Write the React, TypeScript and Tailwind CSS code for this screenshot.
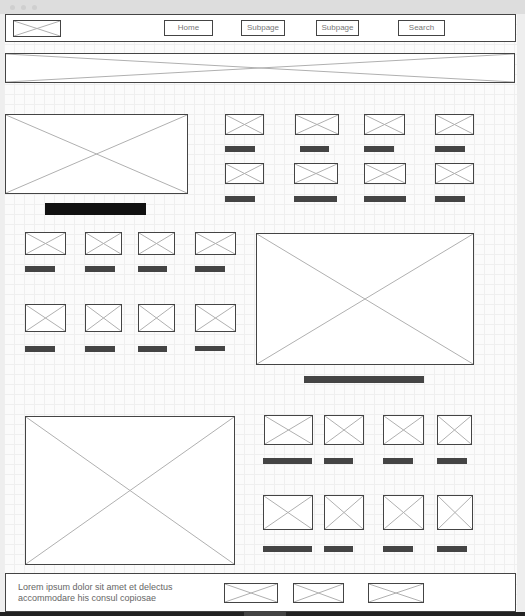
import React from 'react';

// wireframe placeholder: bordered box with a cross
function Ph({ className = '' }: { className?: string }) {
  return (
    <div className={`relative shrink-0 border border-[#444] bg-white ${className}`}>
      <svg className="absolute inset-0 h-full w-full" preserveAspectRatio="none" viewBox="0 0 100 100">
        <line x1="0" y1="0" x2="100" y2="100" stroke="#b0b0b0" strokeWidth="1" vectorEffect="non-scaling-stroke" />
        <line x1="100" y1="0" x2="0" y2="100" stroke="#b0b0b0" strokeWidth="1" vectorEffect="non-scaling-stroke" />
      </svg>
    </div>
  );
}

function Bar({ className = '' }: { className?: string }) {
  return <div className={`shrink-0 bg-[#444] ${className}`} />;
}

function NavButton({ label, className = '' }: { label: string; className?: string }) {
  return (
    <div className={`flex h-[16px] items-center justify-center border border-[#444] bg-white text-[8px] text-[#777] ${className}`}>
      {label}
    </div>
  );
}

export default function App() {
  return (
    <div className="flex h-[616px] w-[525px] flex-col overflow-hidden bg-[#eeeeee] font-['Liberation_Sans',sans-serif]">
      {/* window chrome */}
      <div className="flex h-[14px] shrink-0 items-center gap-[6px] bg-[#dddddd] pl-[10px]">
        <span className="h-[5px] w-[5px] rounded-full bg-[#cfcfcf]" />
        <span className="h-[5px] w-[5px] rounded-full bg-[#cfcfcf]" />
        <span className="h-[5px] w-[5px] rounded-full bg-[#cfcfcf]" />
      </div>

      <div className="flex h-[598px] shrink-0">
        <div className="w-[4px] shrink-0 bg-[#eeeeee]" />
        <main className="flex w-[513px] shrink-0 flex-col bg-[#fbfbfb] bg-[linear-gradient(to_right,#efefef_1px,transparent_1px),linear-gradient(to_bottom,#efefef_1px,transparent_1px)] bg-[size:10px_10px] px-[1px]">
          {/* Nav */}
          <nav className="flex h-[28px] w-[511px] shrink-0 items-center border border-[#444] bg-white">
            <Ph className="ml-[7px] h-[17px] w-[48px]" />
            <NavButton label="Home" className="ml-[103px] w-[49px]" />
            <NavButton label="Subpage" className="ml-[28px] w-[44px]" />
            <NavButton label="Subpage" className="ml-[31px] w-[43px]" />
            <NavButton label="Search" className="ml-[39px] w-[47px]" />
          </nav>

          {/* Banner */}
          <Ph className="mt-[11px] h-[30px] w-[510px]" />

          {/* Section 1 */}
          <section className="mt-[31px] flex items-start">
            <div className="flex w-[183px] flex-col">
              <Ph className="h-[80px] w-[183px]" />
              <div className="ml-[40px] mt-[9px] h-[12px] w-[101px] bg-[#111]" />
            </div>
            <div className="ml-[37px] grid grid-cols-[70px_70px_71px_39px] gap-y-[11px]">
              <div className="flex flex-col"><Ph className="h-[21px] w-[39px]" /><Bar className="mt-[11px] h-[6px] w-[30px]" /></div>
              <div className="flex flex-col"><Ph className="h-[21px] w-[44px]" /><Bar className="ml-[5px] mt-[11px] h-[6px] w-[29px]" /></div>
              <div className="flex flex-col"><Ph className="-ml-[1px] h-[21px] w-[41px]" /><Bar className="-ml-[1px] mt-[11px] h-[6px] w-[30px]" /></div>
              <div className="flex flex-col"><Ph className="-ml-[1px] h-[21px] w-[39px]" /><Bar className="-ml-[1px] mt-[11px] h-[6px] w-[30px]" /></div>
              <div className="flex flex-col"><Ph className="h-[21px] w-[39px]" /><Bar className="mt-[12px] h-[6px] w-[30px]" /></div>
              <div className="flex flex-col"><Ph className="-ml-[1px] h-[21px] w-[44px]" /><Bar className="-ml-[1px] mt-[12px] h-[6px] w-[43px]" /></div>
              <div className="flex flex-col"><Ph className="-ml-[1px] h-[21px] w-[42px]" /><Bar className="-ml-[1px] mt-[12px] h-[6px] w-[42px]" /></div>
              <div className="flex flex-col"><Ph className="-ml-[1px] h-[21px] w-[39px]" /><Bar className="-ml-[1px] mt-[12px] h-[6px] w-[30px]" /></div>
            </div>
          </section>

          {/* Section 2 */}
          <section className="mt-[17px] flex items-start">
            <div className="ml-[20px] grid grid-cols-[60px_53px_57px_41px] gap-y-[32px]">
              <div className="flex flex-col"><Ph className="h-[23px] w-[41px]" /><Bar className="mt-[11px] h-[6px] w-[30px]" /></div>
              <div className="flex flex-col"><Ph className="h-[23px] w-[37px]" /><Bar className="mt-[11px] h-[6px] w-[30px]" /></div>
              <div className="flex flex-col"><Ph className="h-[23px] w-[37px]" /><Bar className="mt-[11px] h-[6px] w-[29px]" /></div>
              <div className="flex flex-col"><Ph className="h-[23px] w-[41px]" /><Bar className="mt-[11px] h-[6px] w-[30px]" /></div>
              <div className="flex flex-col"><Ph className="h-[28px] w-[41px]" /><Bar className="mt-[14px] h-[6px] w-[30px]" /></div>
              <div className="flex flex-col"><Ph className="h-[28px] w-[37px]" /><Bar className="mt-[14px] h-[6px] w-[30px]" /></div>
              <div className="flex flex-col"><Ph className="h-[28px] w-[37px]" /><Bar className="mt-[14px] h-[6px] w-[29px]" /></div>
              <div className="flex flex-col"><Ph className="h-[28px] w-[41px]" /><Bar className="mt-[14px] h-[5px] w-[30px]" /></div>
            </div>
            <div className="ml-[20px] mt-[1px] flex flex-col">
              <Ph className="h-[132px] w-[218px]" />
              <Bar className="ml-[48px] mt-[11px] h-[7px] w-[120px]" />
            </div>
          </section>

          {/* Section 3 */}
          <section className="mt-[32px] flex items-start">
            <Ph className="ml-[20px] mt-[1px] h-[149px] w-[210px]" />
            <div className="ml-[28px] grid grid-cols-[61px_59px_54px_40px] gap-y-[31px]">
              <div className="flex flex-col"><Ph className="ml-[1px] h-[30px] w-[49px]" /><Bar className="mt-[13px] h-[6px] w-[49px]" /></div>
              <div className="flex flex-col"><Ph className="h-[30px] w-[40px]" /><Bar className="mt-[13px] h-[6px] w-[29px]" /></div>
              <div className="flex flex-col"><Ph className="h-[30px] w-[41px]" /><Bar className="mt-[13px] h-[6px] w-[30px]" /></div>
              <div className="flex flex-col"><Ph className="h-[30px] w-[35px]" /><Bar className="mt-[13px] h-[6px] w-[30px]" /></div>
              <div className="flex flex-col"><Ph className="h-[35px] w-[50px]" /><Bar className="mt-[16px] h-[6px] w-[49px]" /></div>
              <div className="flex flex-col"><Ph className="h-[35px] w-[40px]" /><Bar className="mt-[16px] h-[6px] w-[29px]" /></div>
              <div className="flex flex-col"><Ph className="h-[35px] w-[41px]" /><Bar className="mt-[16px] h-[6px] w-[30px]" /></div>
              <div className="flex flex-col"><Ph className="h-[35px] w-[36px]" /><Bar className="mt-[16px] h-[6px] w-[30px]" /></div>
            </div>
          </section>

          {/* Footer */}
          <footer className="mt-auto flex h-[39px] w-[511px] shrink-0 items-center border border-[#444] bg-white">
            <p className="ml-[12px] w-[206px] shrink-0 text-[9px] leading-[11px] text-[#666]">
              Lorem ipsum dolor sit amet et delectus
              <br />
              accommodare his consul copiosae
            </p>
            <Ph className="h-[20px] w-[54px]" />
            <Ph className="ml-[15px] h-[20px] w-[51px]" />
            <Ph className="ml-[24px] h-[20px] w-[56px]" />
          </footer>
        </main>
        <div className="flex-1 bg-[#eeeeee]" />
      </div>

      {/* bottom bar */}
      <div className="flex h-[4px] shrink-0 bg-[#222]">
        <div className="ml-[244px] h-full w-[42px] bg-[#444]" />
      </div>
    </div>
  );
}
